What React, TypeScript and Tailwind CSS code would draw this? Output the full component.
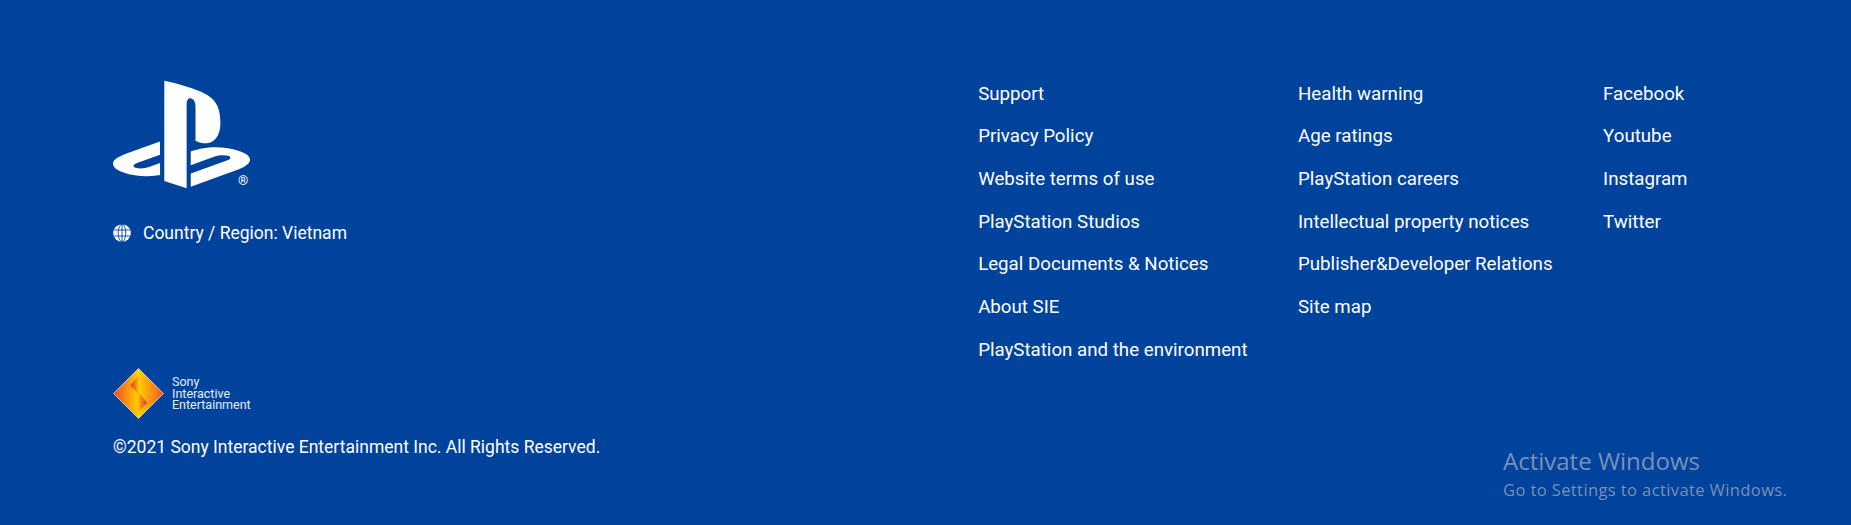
import { SiPlaystation } from 'react-icons/si'

const COLUMNS = [
  [
    'Support',
    'Privacy Policy',
    'Website terms of use',
    'PlayStation Studios',
    'Legal Documents & Notices',
    'About SIE',
    'PlayStation and the environment',
  ],
  [
    'Health warning',
    'Age ratings',
    'PlayStation careers',
    'Intellectual property notices',
    'Publisher&Developer Relations',
    'Site map',
  ],
  ['Facebook', 'Youtube', 'Instagram', 'Twitter'],
]

function GlobeIcon() {
  return (
    <svg viewBox="0 0 18 18" className="w-[18px] h-[18px]">
      <circle cx="9" cy="9" r="8.8" fill="#fff" />
      <g fill="none" stroke="#00439c" strokeWidth="0.9">
        <ellipse cx="9" cy="9" rx="3.8" ry="8.8" />
        <path d="M9 0.5v17M1 6h16M1 12h16" />
      </g>
    </svg>
  )
}

function SieLogo() {
  return (
    <svg viewBox="0 0 50 50" className="w-[51px] h-[51px]">
      <defs>
        <linearGradient id="sie-bg" x1="0" x2="1" y1="0" y2="0">
          <stop offset="0" stopColor="#ef4a23" />
          <stop offset="0.5" stopColor="#ffd000" />
          <stop offset="1" stopColor="#f2552a" />
        </linearGradient>
        <linearGradient id="sie-left" gradientUnits="userSpaceOnUse" x1="17" x2="25" y1="0" y2="0">
          <stop offset="0" stopColor="#e5301f" />
          <stop offset="1" stopColor="#fbb30f" />
        </linearGradient>
        <linearGradient id="sie-right" gradientUnits="userSpaceOnUse" x1="25" x2="33.500" y1="0" y2="0">
          <stop offset="0" stopColor="#fbb30f" />
          <stop offset="1" stopColor="#e5301f" />
        </linearGradient>
      </defs>
      <path d="M25 0.5 49.500 25 25 49.500 0.500 25z" fill="url(#sie-bg)" stroke="#fff" strokeWidth="0.6" />
      <path d="M25 7 17 17l8 9z" fill="url(#sie-left)" />
      <path d="M25 24l8.500 10L25 43z" fill="url(#sie-right)" />
    </svg>
  )
}

export default function App() {
  return (
    <footer className="relative h-[525px] w-full bg-[#00439c] text-white font-['Roboto',sans-serif] text-[17.500px] leading-[26px] overflow-hidden">
      <div className="flex justify-between pl-[113px] pr-[163.500px] pt-[81px]">
        <div className="flex flex-col">
          <div className="relative w-[137px] h-[107px]">
            <SiPlaystation className="w-[137px] h-[137px] -mt-[15px]" />
            <span className="absolute left-[125px] top-[93px] text-[13px] leading-[14px]">®</span>
          </div>
          <div className="flex items-center gap-[12px] mt-[32px]">
            <GlobeIcon />
            <span>Country / Region: Vietnam</span>
          </div>
          <div className="flex items-center gap-[8px] mt-[122px]">
            <SieLogo />
            <div className="text-[12.500px] leading-[11.700px] text-white/90">
              <div>Sony</div>
              <div>Interactive</div>
              <div>Entertainment</div>
            </div>
          </div>
          <p className="mt-[15px]">©2021 Sony Interactive Entertainment Inc. All Rights Reserved.</p>
        </div>
        <div className="flex gap-[50.500px] text-[18.720px] -mt-[0.200px]">
          {COLUMNS.map((links, i) => (
            <ul key={i} className="flex flex-col gap-[16.670px]">
              {links.map((link) => (
                <li key={link}>
                  <a href="#">{link}</a>
                </li>
              ))}
            </ul>
          ))}
        </div>
      </div>
      {/* windows watermark */}
      <div className="absolute left-[1503px] top-[444px] font-['Open_Sans',sans-serif] text-[#7b90b6]">
        <div className="text-[24px] leading-[34px]">Activate Windows</div>
        <div className="text-[16.500px] leading-[24px] tracking-[0.400px]">Go to Settings to activate Windows.</div>
      </div>
    </footer>
  )
}
